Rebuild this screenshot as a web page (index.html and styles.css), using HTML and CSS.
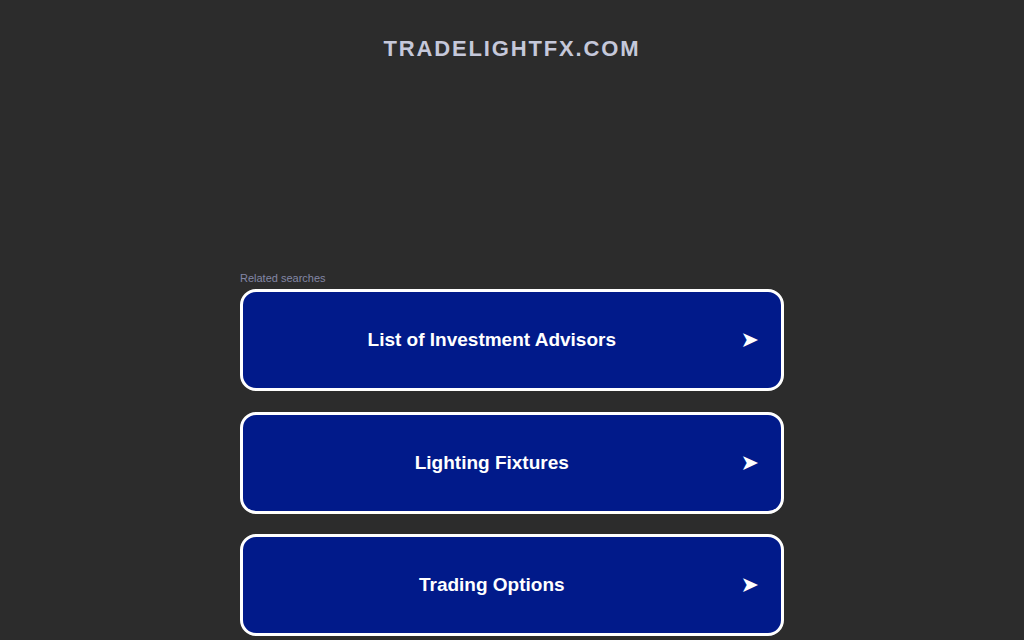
FILE: index.html
```html
<!DOCTYPE html>
<html lang="en">
  <head>
    <meta charset="UTF-8" />
    <meta name="viewport" content="width=device-width, initial-scale=1.0" />
    <title>tradelightfx.com</title>
    <link rel="stylesheet" href="styles.css">
  </head>
  <body>
    <div class="header">
      <h1 class="domain">tradelightfx.com</h1>
    </div>

    <div class="related">
      <p class="related-title">Related searches</p>
      <ul class="link-list">
        <li class="item">
          <a href="#">
            <span class="label">List of Investment Advisors</span>
            <span class="arrow">&#10148;</span>
          </a>
        </li>
        <li class="item">
          <a href="#">
            <span class="label">Lighting Fixtures</span>
            <span class="arrow">&#10148;</span>
          </a>
        </li>
        <li class="item">
          <a href="#">
            <span class="label">Trading Options</span>
            <span class="arrow">&#10148;</span>
          </a>
        </li>
      </ul>
    </div>
  </body>
</html>
```

FILE: styles.css
```css
/* reset */
body,
h1,
p,
ul,
li {
  margin: 0;
  padding: 0;
}

li {
  list-style-type: none;
}

a {
  text-decoration: none;
}

body {
  background-color: #2c2c2c;
  font-family: "Liberation Sans", Arial, sans-serif;
}

.header {
  padding-top: 36px;
  height: 234px;
  box-sizing: border-box;
  text-align: center;
}

.domain {
  font-size: 22px;
  font-weight: bold;
  text-transform: uppercase;
  letter-spacing: 1.85px;
  color: #c5c8da;
  line-height: 26px;
}

.related {
  width: 544px;
  margin: 0 auto;
}

.related-title {
  font-size: 11px;
  color: #8387a6;
  line-height: 13px;
  margin-top: 38px;
  margin-bottom: 4px;
}

.link-list {
  display: flex;
  flex-direction: column;
  gap: 20.5px;
}

.link-list li a {
  display: flex;
  align-items: center;
  height: 102px;
  padding-right: 22px;
  box-sizing: border-box;
  border: 3px solid #fff;
  border-radius: 16px;
  background-color: #011a8a;
  color: #fff;
}

.label {
  flex: 1;
  text-align: center;
  font-size: 19px;
  font-weight: bold;
}

.arrow {
  font-family: "DejaVu Sans", sans-serif;
  font-size: 22px;
  line-height: 1;
}
```
